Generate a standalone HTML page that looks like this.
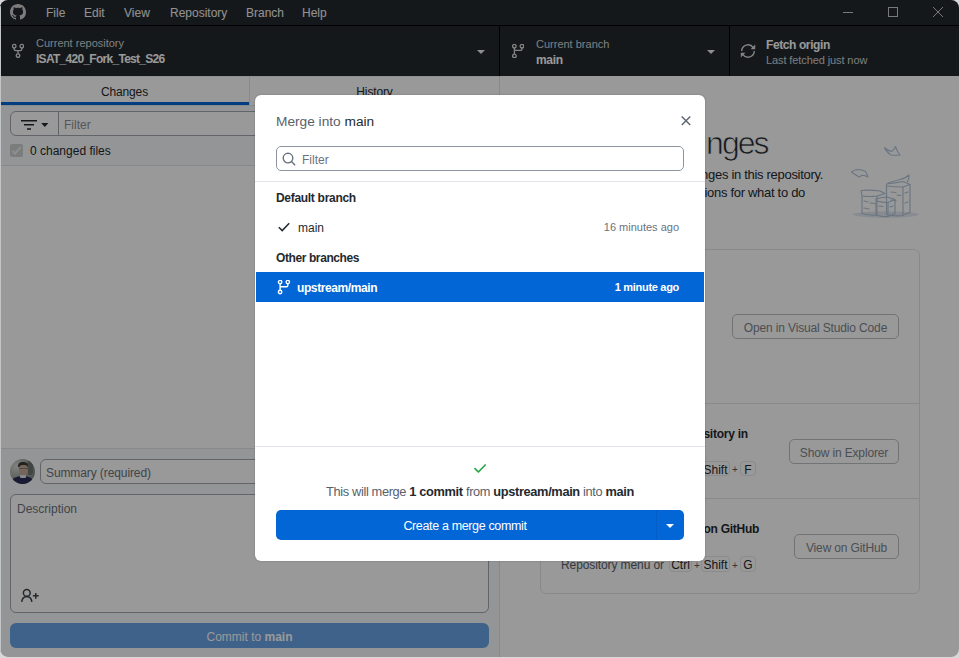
<!DOCTYPE html>
<html><head><meta charset="utf-8">
<style>
*{box-sizing:border-box;margin:0;padding:0}
html,body{width:959px;height:658px;overflow:hidden;background:#d8d8d8;font-family:"Liberation Sans",sans-serif;}
#win{position:absolute;left:0;top:0;width:959px;height:657px;border-radius:8px;overflow:hidden;background:#fff;}
.a{position:absolute;white-space:nowrap}
.t{position:absolute;white-space:nowrap;line-height:1}
.b{font-weight:bold;letter-spacing:-0.3px}
#title{position:absolute;left:0;top:0;width:959px;height:26px;background:#24292e;border-bottom:1px solid #000}
.menu{position:absolute;top:6px;font-size:12px;color:#f4f4f4}
#toolbar{position:absolute;left:0;top:26px;width:959px;height:50px;background:#24292e}
.tsep{position:absolute;top:0;width:1px;height:50px;background:#000}
.tl{font-size:11px;color:#d0d4d8}
.tv{font-size:12px;font-weight:bold;color:#fff}
.btn{border:1px solid #bcc0c4;border-radius:5px;background:#fff;font-size:12px;color:#7d848b;text-align:center;line-height:26px;letter-spacing:-0.15px}
.sc{font-size:12px;color:#586069}
.kb{height:15.5px;border:1px solid #e6e8eb;border-radius:4px;font-size:12px;line-height:17px;text-align:center;color:#24292e;letter-spacing:0}
#overlay{position:absolute;left:0;top:0;width:959px;height:657px;background:rgba(0,0,0,0.4)}
#dlg{position:absolute;left:255px;top:95px;width:450px;height:466px;background:#fff;border-radius:6px;box-shadow:0 0 2px rgba(0,0,0,0.25);overflow:hidden}
</style></head><body>
<div id="win">
  <div id="title">
    <svg class="a" style="left:10px;top:4px" width="16" height="16" viewBox="0 0 16 16"><path fill="#cfcfcf" d="M8 0C3.58 0 0 3.58 0 8c0 3.54 2.29 6.53 5.47 7.59.4.07.55-.17.55-.38 0-.19-.01-.82-.01-1.49-2.01.37-2.53-.49-2.69-.94-.09-.23-.48-.94-.82-1.13-.28-.15-.68-.52-.01-.53.63-.01 1.08.58 1.23.82.72 1.21 1.87.87 2.33.66.07-.52.28-.87.51-1.07-1.78-.2-3.64-.89-3.64-3.95 0-.87.31-1.59.82-2.15-.08-.2-.36-1.02.08-2.12 0 0 .67-.21 2.2.82.64-.18 1.32-.27 2-.27.68 0 1.36.09 2 .27 1.53-1.04 2.2-.82 2.2-.82.44 1.1.16 1.92.08 2.12.51.56.82 1.27.82 2.15 0 3.07-1.87 3.75-3.65 3.95.29.25.54.73.54 1.48 0 1.07-.01 1.93-.01 2.2 0 .21.15.46.55.38A8.013 8.013 0 0016 8c0-4.42-3.58-8-8-8z"/></svg>
    <span class="a menu" style="left:46px">File</span>
    <span class="a menu" style="left:84px">Edit</span>
    <span class="a menu" style="left:124px">View</span>
    <span class="a menu" style="left:170px">Repository</span>
    <span class="a menu" style="left:246px">Branch</span>
    <span class="a menu" style="left:302px">Help</span>
    <div class="a" style="left:843px;top:12px;width:10px;height:1px;background:#ccc"></div>
    <div class="a" style="left:888px;top:7px;width:10px;height:10px;border:1px solid #ccc"></div>
    <svg class="a" style="left:933px;top:7px" width="10" height="10" viewBox="0 0 10 10"><path d="M0 0L10 10M10 0L0 10" stroke="#ccc" stroke-width="1"/></svg>
  </div>
  <div id="toolbar">
    <svg class="a" style="left:12px;top:17px" width="12" height="15" viewBox="0 0 12 15"><g fill="none" stroke="#ddd" stroke-width="1.3"><circle cx="2.2" cy="3.2" r="1.8"/><circle cx="9.8" cy="3.2" r="1.8"/><circle cx="6" cy="12.6" r="1.8"/><path d="M2.2 5v1.2q0 1.4 1.4 1.4h4.8q1.4 0 1.4-1.4V5M6 7.6v3.2"/></g></svg>
    <span class="a tl" style="left:36px;top:11px">Current repository</span>
    <span class="a tv" style="left:36px;top:26px;letter-spacing:-0.72px">ISAT_420_Fork_Test_S26</span>
    <svg class="a" style="left:477px;top:24px" width="8" height="4" viewBox="0 0 8 4"><path d="M0 0h8L4 4z" fill="#eee"/></svg>
    <div class="tsep" style="left:499px"></div>
    <svg class="a" style="left:512px;top:18px" width="12" height="14" viewBox="0 0 12 14"><g fill="none" stroke="#ddd" stroke-width="1.3"><circle cx="2.4" cy="2.2" r="1.8"/><circle cx="9.9" cy="2.2" r="1.8"/><circle cx="2.4" cy="11.9" r="1.8"/><path d="M2.4 4v6.1M9.9 4v1.6q0 0.8-0.8 0.8H3"/></g></svg>
    <span class="a tl" style="left:536px;top:12px">Current branch</span>
    <span class="a tv" style="left:536px;top:27px;letter-spacing:-0.3px">main</span>
    <svg class="a" style="left:707px;top:24px" width="8" height="4" viewBox="0 0 8 4"><path d="M0 0h8L4 4z" fill="#eee"/></svg>
    <div class="tsep" style="left:729px"></div>
    <svg class="a" style="left:740px;top:17px" width="16" height="16" viewBox="0 0 16 16"><g fill="none" stroke="#ddd" stroke-width="1.4"><path d="M1.7 8A6.3 6.3 0 0 1 13.2 4.6M14.3 8A6.3 6.3 0 0 1 2.8 11.4"/></g><path d="M15.2 1.6V6.2H10.6zM0.8 14.4V9.8H5.4z" fill="#ddd"/></svg>
    <span class="a tv" style="left:766px;top:12px;letter-spacing:-0.4px">Fetch origin</span>
    <span class="a tl" style="left:766px;top:28px;letter-spacing:-0.1px">Last fetched just now</span>
  </div>
  <!-- left pane -->
  <div class="a" style="left:0;top:76px;width:499px;height:581px;background:#fff"></div>
  <div class="a" style="left:0;top:76px;width:499px;height:30px;border-bottom:1px solid #e1e4e8"></div>
  <span class="a" style="left:0;top:85px;width:249px;text-align:center;font-size:12px;letter-spacing:-0.15px;color:#24292e">Changes</span>
  <span class="a" style="left:250px;top:85px;width:249px;text-align:center;font-size:12px;letter-spacing:-0.15px;color:#24292e">History</span>
  <div class="a" style="left:249px;top:76px;width:1px;height:29px;background:#e1e4e8"></div>
  <div class="a" style="left:0;top:76px;width:499px;height:1px;background:#eef0f2"></div>
  <div class="a" style="left:0;top:102px;width:249px;height:3px;background:#0366d6"></div>
  <div class="a" style="left:0;top:106px;width:499px;height:59px;background:#f6f8fa"></div>
  <div class="a" style="left:0;top:449px;width:499px;height:208px;background:#f6f8fa"></div>
  <div class="a" style="left:10px;top:111px;width:479px;height:25px;border:1px solid #a2a7ad;border-radius:6px;background:#fff"></div>
  <div class="a" style="left:58px;top:111px;width:1px;height:25px;background:#a2a7ad"></div>
  <svg class="a" style="left:20px;top:119px" width="30" height="12" viewBox="0 0 30 12"><g stroke="#24292e" stroke-width="1.5"><path d="M1 1.7h16M4 5.8h10M7 9.9h4"/></g><path d="M21.2 4h7.2l-3.6 3.9z" fill="#24292e"/></svg>
  <span class="a" style="left:64px;top:118px;font-size:12px;color:#8a929a">Filter</span>
  <div class="a" style="left:10px;top:144px;width:13px;height:13px;border-radius:2px;background:#ced1d1"></div>
  <svg class="a" style="left:10px;top:144px" width="13" height="13" viewBox="0 0 13 13"><path d="M2.5 7l2.6 2.6L10.6 3.2" fill="none" stroke="#eceeee" stroke-width="2"/></svg>
  <span class="a" style="left:30px;top:144px;font-size:12px;color:#24292e">0 changed files</span>
  <div class="a" style="left:0;top:165px;width:499px;height:1px;background:#e1e4e8"></div>
  <div class="a" style="left:0;top:448px;width:499px;height:1px;background:#e1e4e8"></div>
  <div class="a" style="left:10px;top:459px;width:25px;height:25px;border-radius:50%;overflow:hidden;background:radial-gradient(circle at 25% 30%,#d4d8d2 0,#9fa79f 45%,#6f7872 100%)">
    <div class="a" style="left:17px;top:2px;width:6px;height:14px;border-radius:3px;background:#5c645e;opacity:.7"></div>
    <div class="a" style="left:8px;top:3px;width:10px;height:5px;border-radius:5px 5px 1px 1px;background:#3b3632"></div>
    <div class="a" style="left:8.5px;top:6px;width:9px;height:10px;border-radius:40%;background:#c4aa9a"></div>
    <div class="a" style="left:8.5px;top:8.5px;width:9px;height:1.5px;background:#6a5a52;opacity:.6"></div>
    <div class="a" style="left:1px;top:17px;width:23px;height:12px;border-radius:50% 50% 0 0;background:#2c2c58"></div>
    <div class="a" style="left:10px;top:15.5px;width:6px;height:3.5px;border-radius:1px;background:#dfe2ea"></div>
  </div>
  <div class="a" style="left:40px;top:459px;width:449px;height:25px;border:1px solid #a2a7ad;border-radius:6px;background:#fff"></div>
  <span class="a" style="left:46px;top:466px;font-size:12px;letter-spacing:-0.1px;color:#6a737d">Summary (required)</span>
  <div class="a" style="left:10px;top:494px;width:479px;height:119px;border:1px solid #a2a7ad;border-radius:6px;background:#fff"></div>
  <span class="a" style="left:17px;top:502px;font-size:12px;color:#6a737d">Description</span>
  <svg class="a" style="left:20px;top:588px" width="20" height="15" viewBox="0 0 20 15"><g fill="none" stroke="#3d4349" stroke-width="1.5" stroke-linecap="round"><circle cx="6.8" cy="4.9" r="3.4"/><path d="M1.8 13.3q0.7-4.6 5-4.9q4.3 0.3 5 4.9"/><path d="M15.8 4.9v5.8M12.9 7.8h5.8" stroke-linecap="butt"/></g></svg>
  <div class="a" style="left:10px;top:623px;width:479px;height:25px;border-radius:6px;background:#6aa3e6"></div>
  <span class="a" style="left:10px;top:630px;width:479px;text-align:center;font-size:12px;color:#fff">Commit to <b>main</b></span>
  <div class="a" style="left:499px;top:76px;width:1px;height:581px;background:#e1e4e8"></div>
  <!-- right pane -->
  <span class="t" style="right:191.5px;top:127px;font-size:32px;letter-spacing:-2px;color:#24292e;-webkit-text-stroke:0.7px #fff"><span style="color:transparent;-webkit-text-stroke-color:transparent">No local cha</span>nges</span>
  <span class="t" style="right:136px;top:168px;font-size:13px;letter-spacing:-0.3px;color:#24292e">There are no uncommitted changes in this repository.</span>
  <span class="t" style="right:154px;top:186px;font-size:13px;letter-spacing:-0.3px;color:#24292e">Here are some friendly suggestions for what to do</span>
  <span class="t" style="left:540px;top:204px;font-size:13px;letter-spacing:-0.3px;color:#24292e">next.</span>
  <svg class="a" style="left:840px;top:135px" width="90" height="90" viewBox="840 135 90 90">
    <ellipse cx="886" cy="214.5" rx="33" ry="3.2" fill="#e3eaf1"/>
    <g fill="none" stroke="#b3c5d9" stroke-width="1.15" stroke-linejoin="round" stroke-linecap="round">
      <path d="M884.5 147.5q2 5 6.5 7.5q5 0.6 9 0q-3-3.5-4.5-8.5q-1.5 4-4 5q-4-1-7-4z"/>
      <path d="M851.5 172q2-2 6-2.5q5 0 8 2q1.5 2.5 2.5 5.5q-3-1.8-6-1.8q-2 1.5-3 1.8q-4-2.5-7.5-5z"/>
      <path d="M861 190.5q9-1 19 0.5l5 2.5M861 190.5l1 5.5q8 1 15 0l8-2.5M862 196v17.5q7 2 15 1.5V196M877 196v19"/>
      <path d="M864 201l4 1M864 208l5 1M870 203l5 0.5"/>
      <path d="M876 199q6-2 11-2l8 2.5l-7 3q-6 0-12-1.5zM876 201.5v13.5q6 2 12 1.5v-14M888 202.5v14l7-3v-14"/>
      <path d="M879 206l4 0.5M890 207l3-1"/>
      <path d="M886.5 184q8-1 17-2.5l6.5 3l-7 2.5q-8 0-16.5-1z"/>
      <path d="M886.5 186v28.5q8 2 16.5 1V187M903 187v28l7-2.5v-28"/>
      <path d="M888 183q6-2 12-3.5q6-1.5 9-4.5q0.5 3-1.5 7"/>
      <path d="M891 192l5 0.5M891 200l5 0.5M897 195l4 0.5M905 193l3-1M905 203l3-1"/>
    </g>
  </svg>
  <div class="a" style="left:540px;top:249px;width:380px;height:345px;border:1px solid #e1e4e8;border-radius:6px"></div>
  <div class="a" style="left:541px;top:403px;width:378px;height:1px;background:#e1e4e8"></div>
  <div class="a" style="left:541px;top:498px;width:378px;height:1px;background:#e1e4e8"></div>
  <div class="a btn" style="left:732px;top:314px;width:167px;height:25px">Open in Visual Studio Code</div>
  <div class="a btn" style="left:789px;top:439px;width:110px;height:25px">Show in Explorer</div>
  <div class="a btn" style="left:794px;top:534px;width:105px;height:25px">View on GitHub</div>
  <span class="t b" style="left:561px;top:428px;font-size:12px;letter-spacing:-0.25px;color:#24292e">View the files of your repository in</span>
  <span class="t b" style="left:561px;top:446px;font-size:12px;letter-spacing:-0.25px;color:#24292e">Explorer</span>
  <span class="t sc" style="left:561px;top:463.3px;letter-spacing:-0.1px">Repository menu or</span>
  <div class="a kb" style="left:669px;top:460.7px;width:23px">Ctrl</div>
  <span class="t sc" style="left:694px;top:465.3px;font-size:10px;letter-spacing:0">+</span>
  <div class="a kb" style="left:701px;top:460.7px;width:29px">Shift</div>
  <span class="t sc" style="left:732px;top:465.3px;font-size:10px">+</span>
  <div class="a kb" style="left:740px;top:460.7px;width:16px">F</div>
  <span class="t b" style="left:561px;top:523px;font-size:12px;letter-spacing:-0.25px;color:#24292e">Open the repository page on GitHub</span>
  <span class="t b" style="left:561px;top:541px;font-size:12px;letter-spacing:-0.25px;color:#24292e">in your browser</span>
  <span class="t sc" style="left:561px;top:558.6px;letter-spacing:-0.1px">Repository menu or</span>
  <div class="a kb" style="left:669px;top:556.0px;width:23px">Ctrl</div>
  <span class="t sc" style="left:694px;top:560.6px;font-size:10px;letter-spacing:0">+</span>
  <div class="a kb" style="left:701px;top:556.0px;width:29px">Shift</div>
  <span class="t sc" style="left:732px;top:560.6px;font-size:10px">+</span>
  <div class="a kb" style="left:740px;top:556.0px;width:16px">G</div>
  <div id="overlay"></div>
  <div class="a" style="left:0;top:6px;width:1px;height:645px;background:#c3c6c6"></div>
  <div id="dlg">
    <span class="t" style="left:21px;top:20px;font-size:13.7px;color:#586069">Merge into <span style="color:#24292e">main</span></span>
    <svg class="a" style="left:425px;top:20px" width="12" height="12" viewBox="0 0 12 12"><path d="M1.75 1.55l8.5 8.5M10.25 1.55l-8.5 8.5" stroke="#5f6872" stroke-width="1.5"/></svg>
    <div class="a" style="left:21px;top:51px;width:408px;height:25px;border:1px solid #8c959f;border-radius:5px"></div>
    <svg class="a" style="left:27px;top:57px" width="14" height="14" viewBox="0 0 14 14"><g fill="none" stroke="#6a737d" stroke-width="1.4"><circle cx="6" cy="6.1" r="4.8"/><path d="M9.5 9.6l3.6 3.6"/></g></svg>
    <span class="t" style="left:47px;top:59px;font-size:12px;color:#6a737d">Filter</span>
    <div class="a" style="left:0;top:86px;width:450px;height:1px;background:#e1e4e8"></div>
    <span class="t b" style="left:21px;top:97px;font-size:12px;color:#24292e">Default branch</span>
    <svg class="a" style="left:23px;top:127px" width="12" height="10" viewBox="0 0 12 10"><path d="M0.8 5.2l3.4 3.4L11.2 1.2" fill="none" stroke="#24292e" stroke-width="1.5"/></svg>
    <span class="t" style="left:43px;top:127px;font-size:12px;color:#24292e">main</span>
    <span class="t" style="right:26px;top:127px;font-size:11px;color:#6a737d">16 minutes ago</span>
    <span class="t b" style="left:21px;top:157px;font-size:12px;color:#24292e;letter-spacing:-0.4px">Other branches</span>
    <div class="a" style="left:1px;top:177px;width:448px;height:30px;background:#0366d6"></div>
    <svg class="a" style="left:22px;top:185px" width="14" height="15" viewBox="0 0 14 15"><g fill="none" stroke="#fff" stroke-width="1.4"><circle cx="3.1" cy="2.1" r="1.7"/><circle cx="10.8" cy="2.1" r="1.7"/><circle cx="3.1" cy="12" r="1.7"/><path d="M3.1 3.8v6.5M10.8 3.8v1.8q0 1.2-1.2 1.2H3.8"/></g></svg>
    <span class="t b" style="left:42px;top:187px;font-size:12px;color:#fff;letter-spacing:-0.4px">upstream/main</span>
    <span class="t b" style="right:26px;top:187px;font-size:11px;color:#fff">1 minute ago</span>
    <div class="a" style="left:0;top:351px;width:450px;height:1px;background:#e1e4e8"></div>
    <svg class="a" style="left:219px;top:368px" width="12" height="11" viewBox="0 0 12 11"><path d="M1 5.6l3.4 3.4L11.2 2" fill="none" stroke="#28a745" stroke-width="1.7" stroke-linecap="round" stroke-linejoin="round"/></svg>
    <span class="t" style="left:0;width:450px;text-align:center;top:391px;font-size:12.8px;letter-spacing:-0.35px;color:#586069">This will merge <b style="color:#24292e">1 commit</b> from <b style="color:#24292e">upstream/main</b> into <b style="color:#24292e">main</b></span>
    <div class="a" style="left:21px;top:415px;width:408px;height:30px;background:#0366d6;border-radius:5px"></div>
    <div class="a" style="left:401px;top:415px;width:1px;height:30px;background:rgba(0,0,0,0.07)"></div>
    <span class="t" style="left:20px;width:380px;text-align:center;top:425px;font-size:12.5px;letter-spacing:-0.35px;color:#fff">Create a merge commit</span>
    <svg class="a" style="left:411px;top:429px" width="8" height="4" viewBox="0 0 8 4"><path d="M0 0h8L4 4z" fill="#fff"/></svg>
  </div>
</div>
</body></html>
